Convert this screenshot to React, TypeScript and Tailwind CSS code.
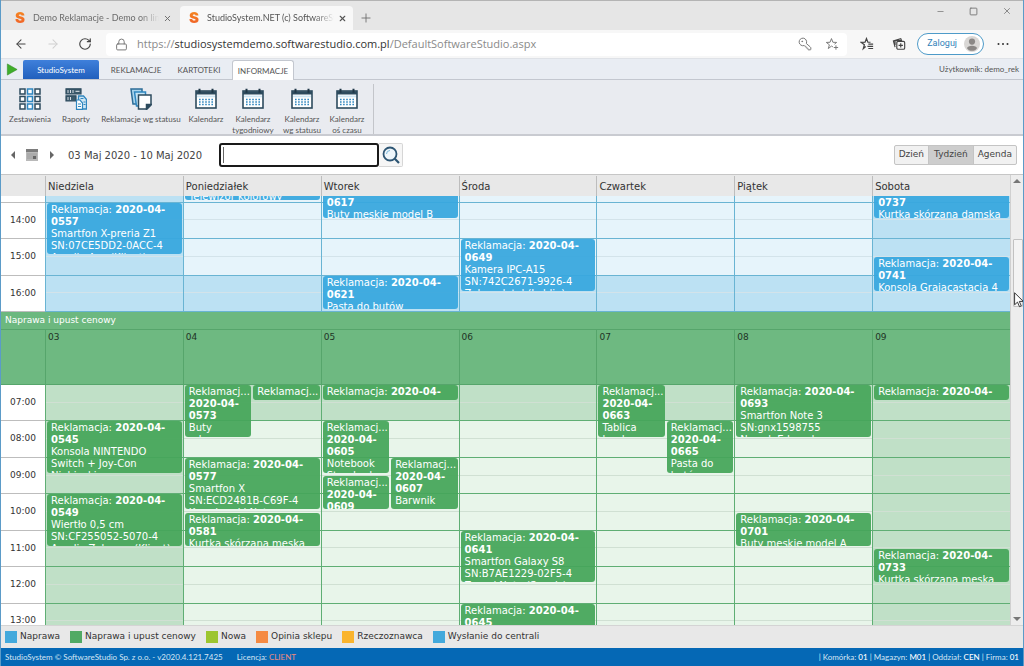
import type { ReactNode } from "react";
import { ArrowLeft, ArrowRight, KeyRound, Lock, Minus, Plus, RotateCw, Square, X } from "lucide-react";

type Tone = "blue" | "green";

interface CalendarEvent {
  day: number;
  start: number;
  end: number;
  id?: string;
  lines?: string[];
  lane?: number;
}

const DAYS = ["Niedziela", "Poniedziałek", "Wtorek", "Środa", "Czwartek", "Piątek", "Sobota"];

const REPAIRS: CalendarEvent[] = [
  { day: 0, start: 14, end: 15.5, id: "0557", lines: ["Smartfon X-preria Z1", "SN:07CE5DD2-0ACC-4", "Amelia Aps (Klient)"] },
  { day: 1, start: 13, end: 14, id: "0579", lines: ["Telewizor kolorowy"] },
  { day: 2, start: 13.5, end: 14.5, id: "0617", lines: ["Buty męskie model B"] },
  { day: 2, start: 16, end: 17, id: "0621", lines: ["Pasta do butów"] },
  { day: 3, start: 15, end: 16.5, id: "0649", lines: ["Kamera IPC-A15", "SN:742C2671-9926-4", "Zakup detal (Lublin)"] },
  { day: 6, start: 13.5, end: 14.5, id: "0737", lines: ["Kurtka skórzana damska"] },
  { day: 6, start: 15.5, end: 16.5, id: "0741", lines: ["Konsola Grajacastacja 4"] },
];

const DISCOUNTS: CalendarEvent[] = [
  { day: 0, start: 8, end: 9.5, id: "0545", lines: ["Konsola NINTENDO", "Switch + Joy-Con", "Niebieski"] },
  { day: 0, start: 10, end: 11.5, id: "0549", lines: ["Wiertło 0,5 cm", "SN:CF255052-5070-4", "Amelia Zakrzew (Klient)"] },
  { day: 1, start: 7, end: 8.5, id: "0573", lines: ["Buty", "robocze"], lane: 0 },
  { day: 1, start: 7, end: 7.5, lane: 1 },
  { day: 1, start: 9, end: 10.5, id: "0577", lines: ["Smartfon X", "SN:ECD2481B-C69F-4", "Kowalewski Natan"] },
  { day: 1, start: 10.5, end: 11.5, id: "0581", lines: ["Kurtka skórzana męska"] },
  { day: 2, start: 7, end: 7.5 },
  { day: 2, start: 8, end: 9.5, id: "0605", lines: ["Notebook", "Standard"], lane: 0 },
  { day: 2, start: 9.5, end: 10.5, id: "0609", lane: 0 },
  { day: 2, start: 9, end: 10.5, id: "0607", lines: ["Barwnik", "czarny"], lane: 1 },
  { day: 3, start: 11, end: 12.5, id: "0641", lines: ["Smartfon Galaxy S8", "SN:B7AE1229-02F5-4", "Zamoj Nata (Serwis)"] },
  { day: 3, start: 13, end: 14, id: "0645" },
  { day: 4, start: 7, end: 8.5, id: "0663", lines: ["Tablica", "kredowa"], lane: 0 },
  { day: 4, start: 8, end: 9.5, id: "0665", lines: ["Pasta do", "butów"], lane: 1 },
  { day: 5, start: 7, end: 8.5, id: "0693", lines: ["Smartfon Note 3", "SN:gnx1598755", "Nowak Edward"] },
  { day: 5, start: 10.5, end: 11.5, id: "0701", lines: ["Buty męskie model A"] },
  { day: 6, start: 7, end: 7.5 },
  { day: 6, start: 11.5, end: 12.5, id: "0733", lines: ["Kurtka skórzana męska"] },
];

const LEGEND = [
  { label: "Naprawa", color: "bg-[#43a9dc]" },
  { label: "Naprawa i upust cenowy", color: "bg-[#51aa64]" },
  { label: "Nowa", color: "bg-[#9dc52f]" },
  { label: "Opinia sklepu", color: "bg-[#f58a42]" },
  { label: "Rzeczoznawca", color: "bg-[#fab42d]" },
  { label: "Wysłanie do centrali", color: "bg-[#43a9dc]" },
];

const TONES = {
  blue: {
    event: "bg-[#38a7de]/94",
    dark: "bg-[#bce1f3]",
    light: "bg-[#e6f4fb]",
    hour: "border-[#69b4d3]",
    day: "border-[#69b4d3]",
    half: "border-[#d3e3ea]",
  },
  green: {
    event: "bg-[#46a65a]/94",
    dark: "bg-[#c0e0c7]",
    light: "bg-[#e8f5ea]",
    hour: "border-[#5fae74]",
    day: "border-[#5fae74]",
    half: "border-[#d0e0d3]",
  },
};

function Logo() {
  return (
    <span className="bg-gradient-to-b from-[#f58a1f] to-[#ef5a28] bg-clip-text font-['Inter'] text-[15px] leading-4 font-black text-transparent">
      S
    </span>
  );
}

function BrowserTabs() {
  return (
    <div className="flex h-[30px] items-end border-t border-[#b4b4b4] bg-[#e6e6e6] text-[#6b6b6b]">
      <div className="flex h-6 w-[179px] items-center pr-2 pl-[14px]">
        <Logo />
        <span className="ml-2 flex-1 overflow-hidden [mask-image:linear-gradient(to_right,black_85%,transparent)] text-[9px] whitespace-nowrap">
          Demo Reklamacje - Demo on line
        </span>
        <button aria-label="Zamknij kartę" className="ml-1">
          <X className="size-[9px]" strokeWidth={2.5} />
        </button>
      </div>
      <div className="flex h-6 w-[173px] items-center rounded-t bg-[#f8f8f8] pr-[6px] pl-[9px] text-[#555]">
        <Logo />
        <span className="ml-2 flex-1 overflow-hidden [mask-image:linear-gradient(to_right,black_85%,transparent)] text-[9px] whitespace-nowrap">
          StudioSystem.NET (c) SoftwareStudio
        </span>
        <button aria-label="Zamknij kartę" className="ml-1">
          <X className="size-[9px]" strokeWidth={3} />
        </button>
      </div>
      <button aria-label="Nowa karta" className="mb-[5px] ml-[6px]">
        <Plus className="size-[14px]" strokeWidth={1.5} />
      </button>
      <div className="mr-[11px] mb-[14px] ml-auto flex items-center gap-[24px] text-[#777]">
        <button aria-label="Minimalizuj">
          <Minus className="size-[9px]" strokeWidth={2} />
        </button>
        <button aria-label="Maksymalizuj">
          <Square className="size-[9px]" strokeWidth={2.5} />
        </button>
        <button aria-label="Zamknij">
          <X className="size-[10px]" strokeWidth={2} />
        </button>
      </div>
    </div>
  );
}

function StarIcon({ children }: { children?: ReactNode }) {
  return (
    <svg viewBox="0 0 16 16" className="size-[14px]" fill="none" stroke="currentColor" strokeWidth="1.1">
      {children}
    </svg>
  );
}

function AddressBar() {
  return (
    <div className="flex h-7 items-center bg-[#f7f7f7] text-[#444]">
      <button aria-label="Wstecz" className="ml-[13px]">
        <ArrowLeft className="size-[14px]" strokeWidth={1.8} />
      </button>
      <button aria-label="Dalej" className="ml-[18px] text-[#d0d0d0]">
        <ArrowRight className="size-[14px]" strokeWidth={1.8} />
      </button>
      <button aria-label="Odśwież" className="ml-[18px]">
        <RotateCw className="size-[14px]" strokeWidth={2} />
      </button>
      <div className="ml-[14px] flex h-[23px] flex-1 items-center rounded bg-white pr-2 pl-[9px]">
        <Lock className="size-[13px] text-[#777]" strokeWidth={1.8} />
        <p className="ml-[9px] flex-1 font-['Open_Sans',sans-serif] text-[11px] text-[#8a8a8a]">
          https://<span className="text-[#333]">studiosystemdemo.softwarestudio.com.pl</span>/DefaultSoftwareStudio.aspx
        </p>
        <button aria-label="Hasła">
          <KeyRound className="size-[14px] -scale-x-100 text-[#777]" strokeWidth={1.7} />
        </button>
        <button aria-label="Dodaj do ulubionych" className="ml-[13px] text-[#777]">
          <StarIcon>
            <path d="M9 11.200 7.400 10.400 3.800 13.200 5 8.900 1.500 6.200 5.800 6 7.400 1.800 9 6l4.300.2-2.500 2" />
            <path d="M12.500 9.500v5M10 12h5" />
          </StarIcon>
        </button>
      </div>
      <button aria-label="Ulubione" className="ml-[13px]">
        <StarIcon>
          <path d="M6.500 10.800 3.800 13.200 5 8.900 1.500 6.200 5.800 6 7.400 1.800 9 6h3" strokeWidth="1.400" />
          <path d="M9.500 8.200H15M8.500 10.700H15M9.500 13.200H15" strokeWidth="1.300" />
        </StarIcon>
      </button>
      <button aria-label="Kolekcje" className="ml-[18px]">
        <svg viewBox="0 0 16 16" className="size-[14px]" fill="none" stroke="currentColor" strokeWidth="1.3">
          <rect x="5.5" y="5" width="9" height="9" rx="1.5" />
          <path d="M10 7v5M7.5 9.5h5M3.5 11.5 1.6 4.5 10 2l.8 1.5M3.5 9V4h8" />
        </svg>
      </button>
      <button className="ml-[11px] flex h-[22px] items-center gap-[7px] rounded-full border border-[#4e9bc9] bg-white pr-[3px] pl-[9px] font-[Roboto,sans-serif] text-[9px] text-[#3282b8]">
        Zaloguj
        <svg viewBox="0 0 16 16" className="size-4">
          <circle cx="8" cy="8" r="8" fill="#d9d7d5" />
          <circle cx="8" cy="5.6" r="3.1" fill="#8b8886" />
          <path d="M3 12.2c0-3.4 10-3.4 10 0-1.500 3.400-8.500 3.400-10 0z" fill="#8b8886" />
        </svg>
      </button>
      <button aria-label="Więcej" className="mr-[14px] ml-[13px]">
        <svg viewBox="0 0 12 4" className="h-1 w-3" fill="#333">
          <circle cx="1.500" cy="2" r="1" />
          <circle cx="6" cy="2" r="1" />
          <circle cx="10.500" cy="2" r="1" />
        </svg>
      </button>
    </div>
  );
}

function RibbonTabs() {
  return (
    <nav className="flex h-[22px] items-end border-t border-b border-t-[#dfe2e7] border-b-[#c3c7cf] bg-[#e9edf3] text-[8px] text-[#555]">
      <svg viewBox="0 0 12 14" className="mb-[3px] ml-[5px] h-[13px] w-3">
        <path d="M1 1l10.500 6L1 13z" fill="#3fae2a" stroke="#2d8a1e" strokeWidth="0.6" />
      </svg>
      <button className="ml-[5px] h-[19px] w-[76px] rounded-t-[2px] bg-gradient-to-b from-[#3f80db] to-[#2160bd] text-white">
        StudioSystem
      </button>
      <button className="h-[19px] w-[74px]">REKLAMACJE</button>
      <button className="h-[19px] w-[52px]">KARTOTEKI</button>
      <button className="-mb-px ml-[7px] h-5 w-[62px] rounded-t-[3px] border border-b-0 border-[#c3c7cf] bg-white">
        INFORMACJE
      </button>
      <span className="mr-1 mb-[4px] ml-auto">Użytkownik: demo_rek</span>
    </nav>
  );
}

function GridIcon() {
  return (
    <svg viewBox="0 0 22 22" className="size-[22px]" fill="#fff" strokeWidth="1.5">
      {[1, 8.5, 16].map((y) =>
        [1, 8.5, 16].map((x) => (
          <rect key={`${x}-${y}`} x={x} y={y} width="5" height="5" stroke={x === 8.5 ? "#2f86bf" : "#2d4b5e"} />
        )),
      )}
    </svg>
  );
}

function ReportsIcon() {
  return (
    <svg viewBox="0 0 22 22" className="size-[22px]" fill="none">
      <path d="M1 .8h15v5H1zM1 7.800h10v5H1z" fill="#3d5a6c" stroke="#2d4b5e" strokeWidth="1.200" />
      <path d="M3 2v3M5.500 2v3M8 2v3M3 9v3M5.500 9v3" stroke="#e9ebf0" strokeWidth="0.900" />
      <path d="M10.500 3.300h4" stroke="#e9ebf0" />
      <path d="M13.500 8h5l3 3.500V21h-8z" fill="#cfe6f4" stroke="#2f86bf" strokeWidth="1.300" />
      <path d="M11.500 12h3.500l2.500 3v6.300h-6z" fill="#fff" stroke="#2f86bf" strokeWidth="1.200" />
      <path d="M13 16h3M13 18.500h3M18.500 14h2M18.500 16.500h2M15.500 10.500h3" stroke="#2f86bf" />
    </svg>
  );
}

function CopiesIcon() {
  return (
    <svg viewBox="0 0 22 22" className="size-[22px]" strokeWidth="1.500">
      <path d="M1 1h11v15H3z" fill="#a9d5ee" stroke="#2d6c96" />
      <path d="M4.500 4h11v14h-9z" fill="#c5e4f5" stroke="#2f86bf" />
      <path d="M8.500 7h12.500v10l-4 4h-8.500z" fill="#fff" stroke="#2d4b5e" />
      <path d="M21 16.500h-4.500V21z" fill="#2d4b5e" stroke="#2d4b5e" />
    </svg>
  );
}

function CalendarIcon() {
  return (
    <svg viewBox="0 0 22 22" className="size-[22px]">
      <rect x="1" y="3" width="20" height="17" fill="#fff" stroke="#2d4b5e" strokeWidth="1.600" />
      <path d="M1 3.200h20v3.300H1z" fill="#2d4b5e" />
      <path d="M2 7.500h18v1.800H2z" fill="#cfe6f4" />
      <path d="M4.500.8v4M17.500.8v4" stroke="#1f3646" strokeWidth="2" />
      <path d="M4 11.500h14M4 14h14M4 16.500h14" stroke="#2f86bf" strokeWidth="1.500" strokeDasharray="1.600 1.500" />
    </svg>
  );
}

function RibbonButton({ icon, label, width }: { icon: ReactNode; label: string; width: string }) {
  return (
    <button className={`flex flex-col items-center gap-1 self-start ${width}`}>
      {icon}
      <span className="leading-[11px] whitespace-pre">{label}</span>
    </button>
  );
}

function Ribbon() {
  return (
    <div className="flex h-14 items-stretch overflow-hidden border-b-2 border-[#c9cbd1] bg-[#e9ebf0] pt-2 pl-[6px] text-[8px] text-[#555]">
      <RibbonButton icon={<GridIcon />} label="Zestawienia" width="w-[46px]" />
      <RibbonButton icon={<ReportsIcon />} label="Raporty" width="w-[46px]" />
      <RibbonButton icon={<CopiesIcon />} label="Reklamacje wg statusu" width="w-[84px]" />
      <RibbonButton icon={<CalendarIcon />} label="Kalendarz" width="w-[46px]" />
      <RibbonButton icon={<CalendarIcon />} label={"Kalendarz\ntygodniowy"} width="w-[48px]" />
      <RibbonButton icon={<CalendarIcon />} label={"Kalendarz\nwg statusu"} width="w-[50px]" />
      <RibbonButton icon={<CalendarIcon />} label={"Kalendarz\noś czasu"} width="w-[40px]" />
      <div className="-mt-1 ml-[6px] w-px bg-[#c3c5ca]" />
    </div>
  );
}

function CalendarToolbar() {
  return (
    <div className="flex h-[38px] items-center bg-white text-[10px] text-[#444]">
      <button aria-label="Poprzedni tydzień" className="ml-[10px]">
        <svg viewBox="0 0 4 8" className="h-2 w-1" fill="#666">
          <path d="M4 0v8L0 4z" />
        </svg>
      </button>
      <button aria-label="Wybierz datę" className="ml-[11px]">
        <svg viewBox="0 0 12 12" className="size-3">
          <rect width="12" height="12" fill="#b9b9b9" />
          <rect width="12" height="3" fill="#7c7c7c" />
          <path d="M1 5h10M1 7h10M1 9h10" stroke="#969696" strokeWidth="0.800" />
          <rect x="7" y="7" width="3" height="3" fill="#666" />
        </svg>
      </button>
      <button aria-label="Następny tydzień" className="ml-3">
        <svg viewBox="0 0 4 8" className="h-2 w-1" fill="#666">
          <path d="M0 0v8l4-4z" />
        </svg>
      </button>
      <span className="ml-[14px] w-[151px] whitespace-nowrap">03 Maj 2020 - 10 Maj 2020</span>
      <div className="relative">
        <input
          type="text"
          aria-label="Szukaj"
          className="block h-6 w-40 rounded-[3px] border-2 border-[#1a1a1a] bg-white px-1 outline-none"
        />
        <span className="absolute top-1 left-1 h-4 w-px bg-[#666]" />
      </div>
      <button aria-label="Szukaj" className="flex h-6 w-6 items-center justify-center rounded-r-[2px] border border-l-0 border-[#d6d6d6] bg-[#f6f6f6]">
        <svg viewBox="0 0 18 18" className="size-[18px]" fill="none">
          <circle cx="8" cy="8" r="6.500" fill="#eef6fb" stroke="#2d5573" strokeWidth="1.800" />
          <path d="M4.500 8A3.500 3.500 0 0 1 8 4.500" stroke="#7ab8dc" />
          <path d="M12.800 12.800 17 17" stroke="#2d5573" strokeWidth="2.200" />
        </svg>
      </button>
      <div className="mr-[6px] ml-auto flex h-5 divide-x divide-[#c4c4c4] overflow-hidden rounded-[2px] border border-[#c4c4c4] bg-[#f1f1f1] text-[9px]">
        <button className="px-1">Dzień</button>
        <button className="bg-[#cdcdcd] px-[5px]">Tydzień</button>
        <button className="px-1">Agenda</button>
      </div>
    </div>
  );
}

function EventCard({ event, tone, first, hours }: { event: CalendarEvent; tone: Tone; first: number; hours: number }) {
  const split = event.lane !== undefined;
  return (
    <div
      className="absolute px-px pb-[3px]"
      style={{
        top: `${((event.start - first) / hours) * 100}%`,
        height: `${((event.end - event.start) / hours) * 100}%`,
        left: event.lane === 1 ? "50%" : 0,
        width: split ? "50%" : "100%",
      }}
    >
      <div className={`h-full overflow-hidden rounded-[3px] pt-px pl-[4px] text-[10px] leading-[12px] text-white ${TONES[tone].event}`}>
        {split ? "Reklamacj..." : "Reklamacja:"}{" "}
        {(event.id || !split) && (
          <b>
            2020-04-
            <wbr />
            {event.id}
          </b>
        )}
        {event.lines?.map((line) => (
          <div key={line} className="whitespace-nowrap">
            {line}
          </div>
        ))}
      </div>
    </div>
  );
}

interface SlotsProps {
  tone: Tone;
  first: number;
  hours: number;
  darkHour: number;
  events: CalendarEvent[];
  className: string;
}

function Slots({ tone, first, hours, darkHour, events, className }: SlotsProps) {
  const colors = TONES[tone];
  const rows = Array.from({ length: hours }, (_, i) => first + i);
  return (
    <div className={`flex shrink-0 ${className}`}>
      <div className="flex w-11 shrink-0 flex-col bg-white">
        {rows.map((hour) => (
          <div key={hour} className="flex flex-1 items-center justify-center border-b border-[#bdbdbd] text-[#333]">
            {String(hour).padStart(2, "0")}:00
          </div>
        ))}
      </div>
      <div className="grid flex-1 grid-cols-7">
        {DAYS.map((name, day) => (
          <div key={name} className={`relative flex min-w-0 flex-col border-l ${colors.day}`}>
            {rows.map((hour) => (
              <div
                key={hour}
                className={`flex flex-1 flex-col border-b ${colors.hour} ${
                  day === 0 || day === 6 || hour === darkHour ? colors.dark : colors.light
                }`}
              >
                <div className={`h-1/2 border-b ${colors.half}`} />
              </div>
            ))}
            {events
              .filter((event) => event.day === day)
              .map((event) => (
                <EventCard key={`${event.start}-${event.lane}`} event={event} tone={tone} first={first} hours={hours} />
              ))}
          </div>
        ))}
      </div>
    </div>
  );
}

function Scrollbar() {
  return (
    <div className="flex w-[13px] shrink-0 flex-col items-center border-l border-[#d0d0d0] bg-[#ededed]">
      <svg viewBox="0 0 8 4" className="mt-1 h-1 w-2" fill="#777">
        <path d="M0 4h8L4 0z" />
      </svg>
      <div className="relative mt-[56px] h-[68px] w-[10px] self-end rounded-[1px] border border-[#c2c2c2] bg-[#f4f4f4]">
        <svg viewBox="0 0 10 16" className="absolute top-[52px] left-0 h-4 w-[10px]">
          <path d="M.6.8v12l2.900-2.700 2 4.600 1.800-.8-2-4.500h4z" fill="#fff" stroke="#222" strokeWidth="0.900" />
        </svg>
      </div>
      <svg viewBox="0 0 8 4" className="mt-auto mb-1 h-1 w-2" fill="#777">
        <path d="M0 0h8L4 4z" />
      </svg>
    </div>
  );
}

function Calendar() {
  return (
    <div className="flex min-h-0 flex-1 border-t border-[#c6c6c6] text-[9px]">
      <div className="flex min-w-0 flex-1 flex-col">
        <div className="flex h-[21px] shrink-0 bg-[#e8e8e8] pt-px text-[10px] text-[#333]">
          <div className="w-11" />
          <div className="grid flex-1 grid-cols-7">
            {DAYS.map((name) => (
              <div key={name} className="flex items-center border-l border-[#bdbdbd] pl-[2px]">
                {name}
              </div>
            ))}
          </div>
        </div>
        <div className="flex min-h-0 flex-1 flex-col overflow-hidden">
          <Slots tone="blue" first={13} hours={4} darkHour={16} events={REPAIRS} className="-mt-[30px] h-[146px]" />
          <div className="relative flex h-[18px] shrink-0 items-center border-b border-[#56a56b] bg-[#6cb87f] pt-px pl-1 text-white">
            Naprawa i upust cenowy
          </div>
          <div className="flex h-[55px] shrink-0 border-b border-[#56a56b] bg-[#6eb981] text-[#1f3325]">
            <div className="w-11" />
            <div className="grid flex-1 grid-cols-7">
              {DAYS.map((name, i) => (
                <div key={name} className="border-l border-[#56a56b] pl-[2px] leading-[14px]">
                  {String(i + 3).padStart(2, "0")}
                </div>
              ))}
            </div>
          </div>
          <Slots tone="green" first={7} hours={7} darkHour={7} events={DISCOUNTS} className="h-[255px]" />
        </div>
      </div>
      <Scrollbar />
    </div>
  );
}

export default function App() {
  return (
    <div className="flex h-screen flex-col overflow-hidden border-x border-[#5b9bc8] font-[Lato,sans-serif]">
      <BrowserTabs />
      <AddressBar />
      <RibbonTabs />
      <Ribbon />
      <main className="flex min-h-0 flex-1 flex-col font-['DejaVu_Sans',sans-serif]">
        <CalendarToolbar />
        <Calendar />
        <ul className="flex h-[23px] shrink-0 items-center gap-[10px] border-t border-[#d4d4d4] bg-[#e8e8e8] pl-1 text-[9px] text-[#333]">
          {LEGEND.map(({ label, color }) => (
            <li key={label} className="flex items-center gap-[3px]">
              <span className={`size-3 ${color}`} />
              {label}
            </li>
          ))}
        </ul>
      </main>
      <footer className="flex h-[18px] shrink-0 items-center bg-[#0568b5] pr-1 pl-1 text-[8px] text-[#d5e6f4]">
        <span>StudioSystem © SoftwareStudio Sp. z o.o. - v2020.4.121.7425</span>
        <span className="ml-[14px]">
          Licencja: <span className="text-[#ee8a80]">CLIENT</span>
        </span>
        <span className="ml-auto">
          | Komórka: <b className="font-medium text-white">01</b> | Magazyn: <b className="font-medium text-white">M01</b> | Oddział:{" "}
          <b className="font-medium text-white">CEN</b> | Firma: <b className="font-medium text-white">01</b>
        </span>
      </footer>
    </div>
  );
}
